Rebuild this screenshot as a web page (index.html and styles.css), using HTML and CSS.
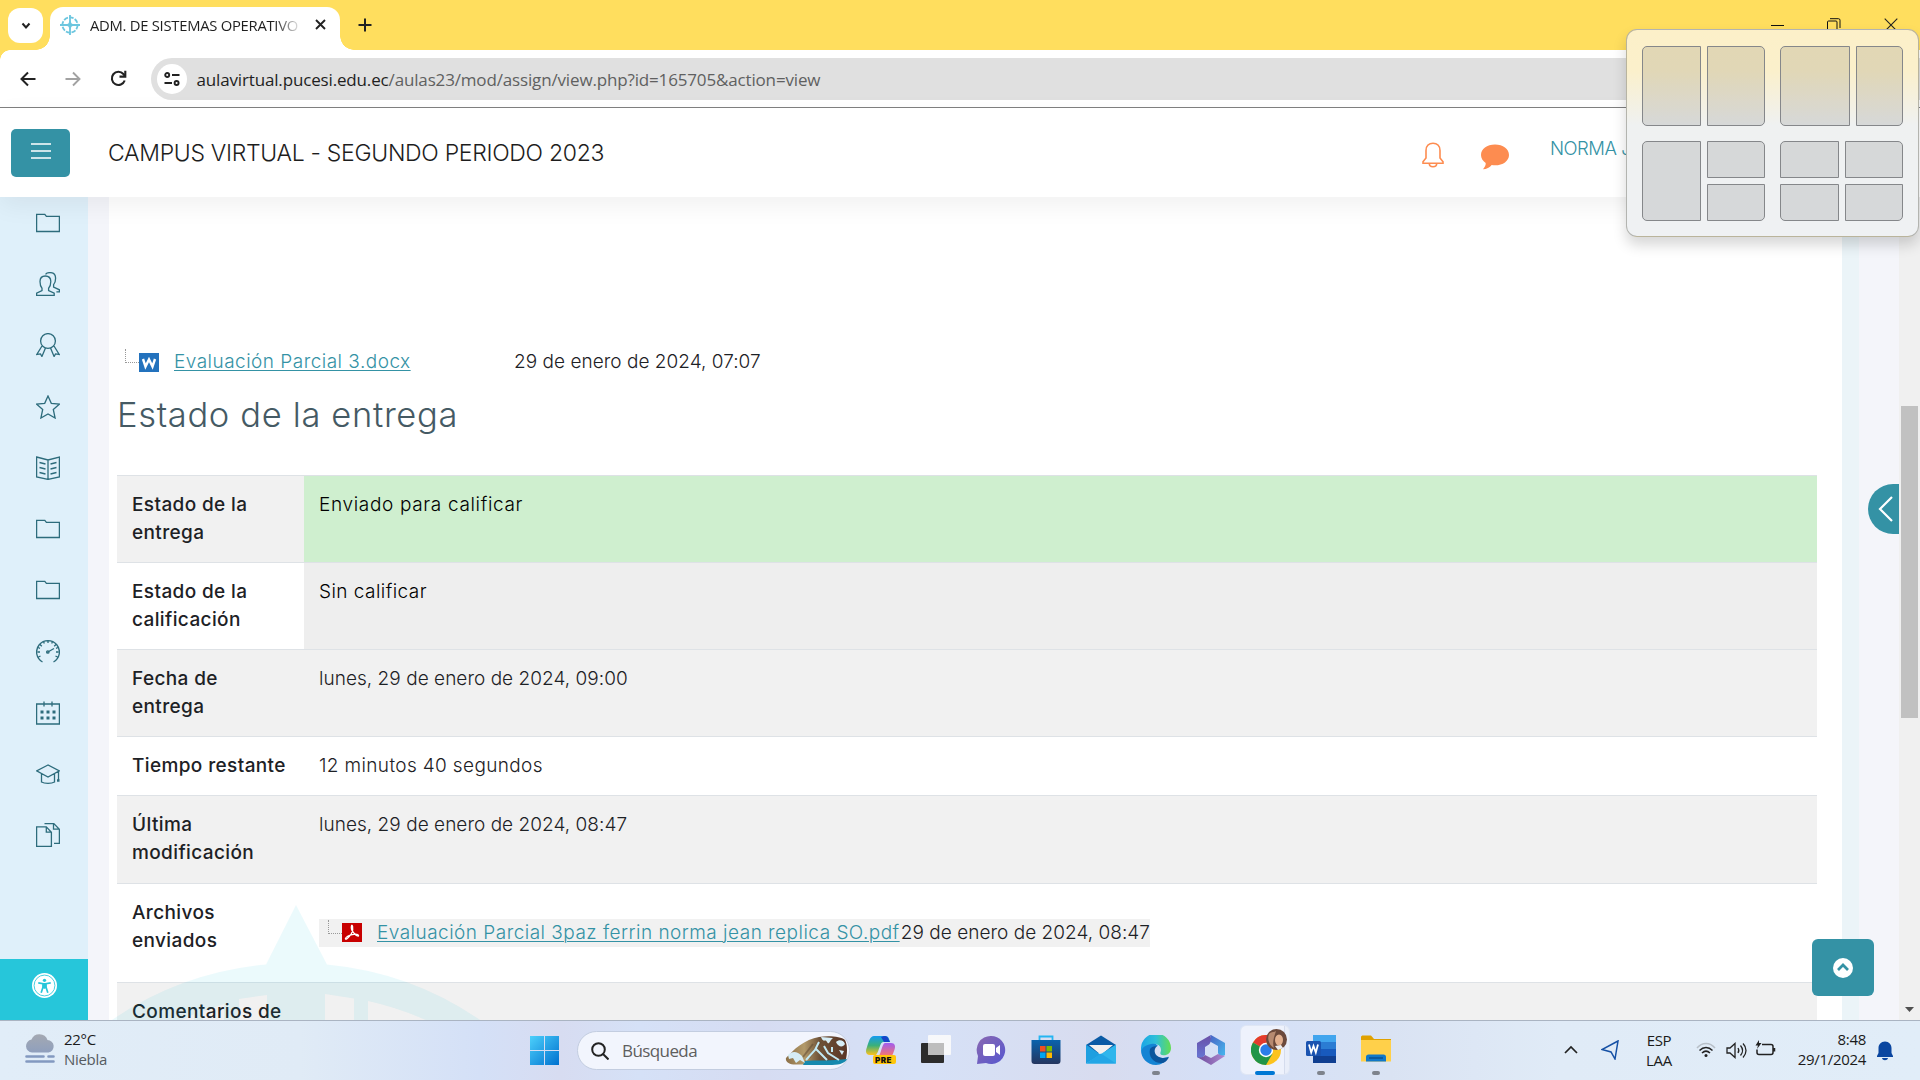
FILE: index.html
```html
<!DOCTYPE html>
<html lang="es">
<head>
<meta charset="utf-8">
<title>ADM. DE SISTEMAS OPERATIVOS</title>
<link rel="stylesheet" href="styles.css">
</head>
<body>
<svg class="defs" width="0" height="0">
  <symbol id="folder" viewBox="0 0 24 24"><path d="M.6 3.300h8.200l1.600 2h13v15.200H.6z"/></symbol>
</svg>
<div class="screen">
  <div class="tabstrip">
    <button class="tabsearch"><svg width="10" height="8" viewBox="0 0 10 8"><path d="M1.500 1.500 5 5.500 8.500 1.500" fill="none" stroke="#222" stroke-width="2"/></svg></button>
    <div class="tab">
      <svg width="20" height="20" viewBox="0 0 20 20" fill="none" stroke="#6cc6df" stroke-width="1.800"><circle cx="10" cy="10" r="7.600" stroke-dasharray="4.500 1.300"/><path d="M10 0v20M0 10h20" stroke-width="1.800"/><path d="M10 5l1.600 3.400L15 10l-3.400 1.600L10 15l-1.600-3.400L5 10l3.400-1.600z" fill="#6cc6df" stroke="none"/></svg>
      <span class="tab-title">ADM. DE SISTEMAS OPERATIVO</span>
      <svg class="tab-x" width="11" height="11" viewBox="0 0 11 11"><path d="M1 1l9 9M10 1l-9 9" stroke="#222" stroke-width="1.900"/></svg>
    </div>
    <svg class="plus" width="14" height="14" viewBox="0 0 14 14"><path d="M7 .5v13M.5 7h13" stroke="#222" stroke-width="2"/></svg>
    <div class="winctl">
      <svg width="13" height="13" viewBox="0 0 13 13"><path d="M0 6.500h13" stroke="#111"/></svg>
      <svg width="14" height="14" viewBox="0 0 14 14" fill="none" stroke="#111"><rect x=".5" y="3" width="9.500" height="10.500" rx="1"/><path d="M3 .700h8.500a1.500 1.500 0 0 1 1.500 1.500V10"/></svg>
      <svg width="14" height="14" viewBox="0 0 14 14"><path d="M.7.700l12.600 12.600M13.300.700L.7 13.300" stroke="#222" stroke-width="1.100"/></svg>
    </div>
  </div>
  <div class="toolbar">
    <svg width="16" height="16" viewBox="0 0 16 16" fill="none" stroke="#222" stroke-width="2"><path d="M15.500 8H1.500M8 1.500 1.500 8 8 14.500"/></svg>
    <svg width="16" height="16" viewBox="0 0 16 16" fill="none" stroke="#a2a2a2" stroke-width="1.900"><path d="M.5 8h14M8 1.500 14.500 8 8 14.500"/></svg>
    <svg width="17" height="17" viewBox="0 0 17 17" fill="none" stroke="#222" stroke-width="2.100"><path d="M14.700 10.500A6.600 6.600 0 1 1 13.400 4l1.600 2"/><path d="M15.300.800V6.600H9.500"/></svg>
    <div class="omnibox">
      <span class="siteinfo"><svg width="16" height="14" viewBox="0 0 16 14" fill="none" stroke="#222" stroke-width="1.900"><circle cx="3.200" cy="3" r="2"/><path d="M8 3h7.500M.5 11h7.500"/><circle cx="12.600" cy="11" r="2"/></svg></span>
      <span class="url"><b>aulavirtual.pucesi.edu.ec</b>/aulas23/mod/assign/view.php?id=165705&amp;action=view</span>
    </div>
  </div>
  <header class="site">
    <button class="burger"><svg width="20" height="16" viewBox="0 0 20 16"><path d="M0 1h20M0 8h20M0 15h20" stroke="#fff" stroke-width="1.700"/></svg></button>
    <h1>CAMPUS VIRTUAL - SEGUNDO PERIODO 2023</h1>
    <svg class="bell" width="22" height="26" viewBox="0 0 22 26" fill="none" stroke="#fd8c50" stroke-width="1.600"><path d="M1 21.200v-1.500l3-3.700V8.500C4 4 7 1.200 11 1.200S18 4 18 8.500V16l3 3.700v1.500zM7.300 21.500c0 2 1.700 3.300 3.700 3.300s3.700-1.300 3.700-3.300"/></svg>
    <svg class="chat" width="30" height="26" viewBox="0 0 30 26"><path d="M15 .5C7 .5 1 5 1 11c0 3.300 1.800 6 4.700 8 .3 2.200-1.200 4.500-2.700 6.300 3.600 0 6.700-1.800 8.700-4.200 9.500 1.500 17.300-3.400 17.300-10.100C29 5 23 .5 15 .5z" fill="#fd8c50"/></svg>
    <span class="user">NORMA J</span>
  </header>
  <div class="page">
    <nav class="side">
      <svg><use href="#folder"/></svg>
      <svg viewBox="0 0 24 24"><path d="M.6 23.400v-2.200L6 18.500v-2.300C4.400 14.500 4 12.500 4 9.500 4 6 6 4 9.300 4s5.500 2 5.500 5.500c0 3-.6 5-2.200 6.700v2.300l5.600 2.700v2.200zM9.500 2.300C10.600 1 12.400.600 14 .600c3.300 0 5.600 2 5.600 5.700 0 3-.5 4.700-2 6.300V15l5.800 2.800v2h-3"/></svg>
      <svg viewBox="0 0 24 24"><circle cx="12" cy="8" r="7.400"/><path d="M6 13 .8 21.500l3.700-.6 1.400 2.600L9.500 15M18 13l5.200 8.500-3.700-.6-1.400 2.600L14.500 15"/></svg>
      <svg viewBox="0 0 24 24"><path d="m12 1 3.300 7.300 8 .9-6 5.300 1.800 8.500-7.100-4-7.100 4 1.800-8.500-6-5.300 8-.9z"/></svg>
      <svg viewBox="0 0 24 24"><path d="M.6 1 12 4 23.400 1v20L12 23.400.6 21zM12 4v19M3.500 6.500l6 1.500M3.500 11.500l6 1.500M3.500 16.500l6 1.500M20.500 6.500l-6 1.500M20.500 11.500l-6 1.500M20.500 16.500l-6 1.500"/></svg>
      <svg><use href="#folder"/></svg>
      <svg><use href="#folder"/></svg>
      <svg viewBox="0 0 24 24"><path d="M6.500 23A11.400 11.400 0 1 1 17.500 23M12 1.500v2.500M1.500 13H4M20 13h2.500M4 5.500l1.800 1.800M20 5.500l-1.800 1.800M7.500 2.500l.8 2M16.500 2.500l-.8 2M2 8.500l2 .8M22 8.500l-2 .8M2.500 18l2-1M21.500 18l-2-1M11 13.500l7-4"/><circle cx="11.800" cy="13" r="1.200"/></svg>
      <svg viewBox="0 0 24 24"><path d="M.6 3h22.800v20H.6zM8 .5v5M16 .5v5"/><path d="M4.500 11h3M10.500 11h3M16.500 11h3M4.500 17h3M10.500 17h3M16.500 17h3" stroke-width="3"/></svg>
      <svg viewBox="0 0 24 24"><path d="M12 3 .6 8.800 12 15l11.400-6.200zM5.500 12v8c3 1.700 10 1.700 13 0v-8M22.500 9.500V18"/><path d="M21 18.500h2.500" stroke-width="2.500"/></svg>
      <svg viewBox="0 0 24 24"><path d="M.6 3.800h9.700l5.100 5.400v14.200H.6zM10.300 3.800v5.400h5.100M8.500.600h9.300l5.600 5.600v14.200H18M17.500.600v5.600h5.900"/></svg>
      <div class="access"><svg viewBox="0 0 24 24"><circle cx="12" cy="12" r="12" fill="#fff" stroke="none"/><circle cx="12" cy="12" r="10" fill="none" stroke="#26c6da" stroke-width=".8"/><circle cx="12" cy="7" r="1.600" fill="#26c6da" stroke="none"/><path d="M6 9.500l4.500.800v3.500L8.800 19M18 9.500l-4.500.800v3.500l1.700 5.200M10.500 10.500h3M12 10v5" stroke="#26c6da" stroke-width="1.600"/></svg></div>
    </nav>
    <main>
      <div class="file">
        <i class="twig"></i><svg class="ficon" viewBox="0 0 20 19"><path fill="#2372bd" d="M0 0h20v19H0z"/><path d="M4 6l2.500 7.500L10 6.500l3.500 7L16 6" fill="none" stroke="#fff" stroke-width="2.400"/></svg>
        <div class="c1"><a>Evaluación Parcial 3.docx</a></div><span>29 de enero de 2024, 07:07</span>
      </div>
      <h2>Estado de la entrega</h2>
      <table>
        <tr><th>Estado de la entrega</th><td class="ok">Enviado para calificar</td></tr>
        <tr><th>Estado de la calificación</th><td class="nograde">Sin calificar</td></tr>
        <tr><th>Fecha de<br>entrega</th><td class="date">lunes, 29 de enero de 2024, 09:00</td></tr>
        <tr><th>Tiempo restante</th><td class="left">12 minutos 40 segundos</td></tr>
        <tr class="tall"><th>Última modificación</th><td class="date">lunes, 29 de enero de 2024, 08:47</td></tr>
        <tr><th>Archivos enviados</th><td><div class="file sent"><i class="twig"></i><svg class="ficon" viewBox="0 0 20 19"><path fill="#c80000" d="M0 0h20v19H0z"/><path d="M3.500 15.500C5 11.500 16 10 16.500 12.500S9 9.500 9.300 4s3 2 .2 6.500-6.500 7-6 5z" fill="none" stroke="#fff" stroke-width="1.300"/></svg><div class="c2"><a>Evaluación Parcial 3paz ferrin norma jean replica SO.pdf</a></div><span>29 de enero de 2024, 08:47</span></div></td></tr>
        <tr class="last"><th>Comentarios de</th><td></td></tr>
      </table>
      <svg class="mark" width="386" height="115" viewBox="109 905 386 115"><path fill="#00bcd4" fill-opacity=".08" fill-rule="evenodd" d="M109 1022A325 325 0 0 1 266 964.500L296 905l31 59.500A325 325 0 0 1 483 1022zM178 1022l16-8v8zM203 1011l21-7v18h-21zM239 999l28-4v27h-28zM325 994l29 4.500v23.500h-29zM368 1001a300 300 0 0 1 62 21h-62z"/></svg>
    </main>
    <div class="gutter"></div>
    <div class="scroll"><i></i><svg width="9" height="5" viewBox="0 0 9 5"><path d="M0 0h9L4.500 5z" fill="#505050"/></svg></div>
    <button class="drawer"><svg width="16" height="26" viewBox="0 0 16 26"><path d="M14 1 2 13l12 12" fill="none" stroke="#fff" stroke-width="2.200"/></svg></button>
    <button class="top"><svg width="20" height="20" viewBox="0 0 20 20"><circle cx="10" cy="10" r="10" fill="#fff"/><path d="M5 12l5-5 5 5" fill="none" stroke="#3492a5" stroke-width="2.700"/></svg></button>
  </div>
  <div class="taskbar">
    <div class="weather">
      <svg width="30" height="30" viewBox="0 0 30 30"><defs><linearGradient id="cl" x2="0" y2="1"><stop stop-color="#a4a9b2"/><stop offset="1" stop-color="#8f9fbd"/></linearGradient></defs><path d="M7 18.500a6.500 6.500 0 0 1-.5-12.900A8.500 8.500 0 0 1 22.500 6 6.300 6.300 0 0 1 23.500 18.500z" fill="url(#cl)"/><path d="M1.500 22.500h17M23.500 22.500h5M1.500 27.500h27" stroke="#8399c0" stroke-width="2.600" stroke-linecap="round"/></svg>
      <div><span class="temp">22°C</span><span class="cond">Niebla</span></div>
    </div>
    <svg class="start" width="29" height="29" viewBox="0 0 29 29"><defs><linearGradient id="wn" x2="1" y2="1"><stop stop-color="#4cd0fb"/><stop offset="1" stop-color="#0071cf"/></linearGradient></defs><path fill="url(#wn)" d="M0 0h14v14H0zM15 0h14v14H15zM0 15h14v14H0zM15 15h14v14H15z"/></svg>
    <div class="search">
      <svg width="18" height="18" viewBox="0 0 18 18" fill="none" stroke="#222" stroke-width="2"><circle cx="7.500" cy="7.500" r="6.300"/><path d="M12 12l5.500 5.500"/></svg>
      <span>Búsqueda</span>
      <svg width="64" height="30" viewBox="0 0 64 30"><defs><linearGradient id="rk"><stop stop-color="#8c7048"/><stop offset=".3" stop-color="#b39a6a"/><stop offset=".55" stop-color="#6e5238"/><stop offset="1" stop-color="#5a3626"/></linearGradient></defs><path d="M1 22C8 14 20 3 34 1c10-1.500 22-.5 26 3 3 6 2 14 1 19-4 5-12 5-18 5.500H12C5 29 0 26 1 22z" fill="url(#rk)"/><path d="M18 21l10-13M24 22l12-16" stroke="#5b4630" stroke-width="2" opacity=".5"/><path d="M20 25c10-1 28 0 42-2-2 5-10 6-18 6H18z" fill="#1689ae"/><path d="M3 19c4-4 9-4 14 1l3 7-5-3-4 3-3-5-4 1zM36 1c3 7 4 1 6 5s3-2 6-4zM51 6c3-3 8-2 9 2-2 4-7 3-9-2zM54 14l5 1-2 4z" fill="#d6edf6"/><path d="M34 6 30 14l-9 10M31 13l11 11M39 10l4 7 11 7M47 11v5" fill="none" stroke="#c3e9f4" stroke-width="2"/></svg>
    </div>
    <div class="apps">
      <span><svg width="30" height="30" viewBox="0 0 30 30"><defs><linearGradient id="c1" x2="0" y2="1"><stop stop-color="#149bf0"/><stop offset=".5" stop-color="#3bb07a"/><stop offset="1" stop-color="#ffc21a"/></linearGradient><linearGradient id="c2" x2="0" y2="1"><stop stop-color="#a05cf0"/><stop offset="1" stop-color="#ff7a62"/></linearGradient></defs><path d="M8 1h12c2 0 3 2 4 6h-7c-3 0-4 10-7 13H4c-4 0-5-3-3-8C3 6 4 1 8 1z" fill="url(#c1)"/><path d="M18 1c4 0 4 2 6 6h-6l-3-5z" fill="#1444c8"/><path d="M19 8h6c4 0 5 3 3 8-1 3-2 6-5 6H12c3-2 4-14 7-14z" fill="url(#c2)"/><rect x="7" y="20" width="23" height="9" rx="2" fill="#ffc60b"/></svg><em>PRE</em></span>
      <span><svg width="30" height="30" viewBox="0 0 30 30"><rect y="8" width="23" height="20" rx="1" fill="#2c2c2c"/><rect x="7" width="23" height="20" rx="1" fill="#fbfbfb" fill-opacity=".9"/><path d="M7 8h16v12H7z" fill="#bdbdbd"/></svg></span>
      <span><svg width="30" height="30" viewBox="0 0 30 30"><defs><linearGradient id="tc" x2="1" y2="1"><stop stop-color="#8a68b0"/><stop offset="1" stop-color="#5657d0"/></linearGradient></defs><path d="M15 1a14 14 0 1 1-5 27L1 29l1-8A14 14 0 0 1 15 1z" fill="url(#tc)"/><rect x="7" y="9" width="12" height="12" rx="2" fill="#fff"/><path d="M20 13l4-3v10l-4-3z" fill="#fff"/></svg></span>
      <span><svg width="30" height="30" viewBox="0 0 30 30"><defs><linearGradient id="st" x2="0" y2="1"><stop stop-color="#0a63ad"/><stop offset="1" stop-color="#25365f"/></linearGradient></defs><path d="M8.500 6V1.500h13V6" fill="none" stroke="#25b5f2" stroke-width="1.800"/><path d="M.5 5h29v21a3 3 0 0 1-3 3h-23a3 3 0 0 1-3-3z" fill="url(#st)"/><path d="M9 11h5.500v5.500H9z" fill="#f25022"/><path d="M15.500 11H21v5.500h-5.500z" fill="#7fba00"/><path d="M9 17.500h5.500V23H9z" fill="#00a4ef"/><path d="M15.500 17.500H21V23h-5.500z" fill="#ffb900"/></svg></span>
      <span><svg width="30" height="30" viewBox="0 0 30 30"><path d="M0 10 15 .5 30 10v8H0z" fill="#0b5ba5"/><path d="M3 10h24L15 20z" fill="#f3f1ef"/><path d="M0 9.500 15 20 0 28.500z" fill="#1e9fe0"/><path d="M30 9.500v19H0L15 19z" fill="#2fb6ec"/><path d="M15 18.500 30 28.500H0z" fill="#23a6e6"/></svg></span>
      <span class="run"><svg width="30" height="30" viewBox="0 0 30 30"><defs><linearGradient id="ed" x2="1"><stop stop-color="#1aa5e6"/><stop offset=".5" stop-color="#2fc0d8"/><stop offset="1" stop-color="#63dd52"/></linearGradient></defs><path d="M0 15C2 5 12 5 17 11c-4 0-6 5-3 9 3 3 9 4 13.500 1.500C25 27 20 30 15 30 6 30 0 23 0 15z" fill="#1484d4"/><path d="M0 14A15 15 0 0 1 30 13c0 6-5 8-9 7-3-1-1-3-1-5 0-5-5-7-10-6C5 10 1 12 0 17z" fill="url(#ed)"/><path d="M9 14c-2 8 4 15 13 14 3-1 5-4 6-6-5 2-12 1-14-4-1-3 0-5 2-7-3 0-6 1-7 3z" fill="#0b559d"/></svg></span>
      <span><svg width="28" height="30" viewBox="0 0 28 30"><defs><linearGradient id="m1" x2="0" y2="1"><stop stop-color="#6a50a8"/><stop offset="1" stop-color="#6676d4"/></linearGradient><linearGradient id="m2" x2="1" y2="1"><stop stop-color="#4a62c4"/><stop offset="1" stop-color="#45b8ee"/></linearGradient><linearGradient id="m3"><stop stop-color="#6a4a9c"/><stop offset="1" stop-color="#b08ad0"/></linearGradient></defs><path d="M0 22V8L13 .5c2 3 1 7-1 9L8 12v8c-2 3-5 4-8 2z" fill="url(#m1)"/><path d="M14 0l14 8v12c-3 2-6 1-7-2v-7l-8-4.500C14 4 14 2 13 .5z" fill="url(#m2)"/><path d="M0 22c4 1 7 0 8-2l6 3 7-4c3 2 6 1 7 2l-14 9z" fill="url(#m3)"/></svg></span>
      <span class="active"><svg width="30" height="30" viewBox="0 0 30 30"><circle cx="15" cy="15" r="15" fill="#fcc31e"/><path d="M15 15 2 7.500A15 15 0 0 1 28 7.500H15z" fill="#e33b2e"/><path d="M2 7.500A15 15 0 0 0 15 30l6.500-11.300L15 15z" fill="#219447"/><circle cx="15" cy="15" r="7.200" fill="#fff"/><circle cx="15" cy="15" r="5.700" fill="#2b7de9"/></svg><svg class="avatar" width="21" height="21" viewBox="0 0 21 21"><circle cx="10.500" cy="10.500" r="10.500" fill="#6d4a3b"/><ellipse cx="13" cy="11" rx="4" ry="5.500" fill="#e3b08e"/><path d="M3 5c3-3 5-1 7-3-2 6-4 12-2 17-5-3-7-9-5-14z" fill="#b78a70"/><path d="M9 17l6-1 2 3-5 2z" fill="#eee"/></svg></span>
      <span class="run"><svg width="30" height="28" viewBox="0 0 30 28"><path d="M7 0h23v7H7z" fill="#41a5ee"/><path d="M7 7h23v7H7z" fill="#2b7cd3"/><path d="M7 14h23v7H7z" fill="#185abd"/><path d="M7 21h23v7H7z" fill="#103f91"/><rect y="6" width="15" height="15" rx="1.500" fill="#1a53b0"/><path d="M3 9.500l2.200 8L7.500 11l2.300 6.500 2.200-8" fill="none" stroke="#fff" stroke-width="1.800"/></svg></span>
      <span class="run"><svg width="30" height="28" viewBox="0 0 30 28"><path d="M0 2C0 1 1 .5 2 .5h8L13 4h17v6H0z" fill="#e0a100"/><path d="M0 5h30v21.500H0z" fill="#ffd04a"/><path d="M5 26.500V22a2.500 2.500 0 0 1 2.500-2.500h15A2.500 2.500 0 0 1 25 22v4.500z" fill="#1078c8"/><path d="M8 23h14" stroke="#0a4f91" stroke-width="1.500"/></svg></span>
    </div>
    <div class="tray">
      <svg class="up" width="14" height="9" viewBox="0 0 14 9"><path d="M1 8l6-6 6 6" fill="none" stroke="#222" stroke-width="1.700"/></svg>
      <svg class="loc" width="18" height="20" viewBox="0 0 18 20"><path d="M17 1 1 9.500l9 2.500 4 7z" fill="none" stroke="#1651a5" stroke-width="1.500"/></svg>
      <div class="lang"><span>ESP</span><span>LAA</span></div>
      <svg class="wifi" width="20" height="16" viewBox="0 0 20 16" fill="none" stroke="#222" stroke-width="1.500"><path d="M1 6c5-6 13-6 18 0" stroke="#b8c0c8"/><path d="M3.500 8.500c4-4 9-4 13 0M6 11c2.500-2.500 5.500-2.500 8 0"/><circle cx="10" cy="13.500" r="1.500" fill="#222" stroke="none"/></svg>
      <svg class="vol" width="21" height="17" viewBox="0 0 21 17" fill="none" stroke="#222" stroke-width="1.300"><path d="M1 6h3l5-4.500v14L4 11H1zM12 6c1 1.500 1 3.500 0 5M14.500 3.500c2.500 3 2.500 7 0 10M17 1.500c4 4 4 10 0 14"/></svg>
      <svg class="bat" width="21" height="17" viewBox="0 0 21 17"><path d="M7 4.500h9a2 2 0 0 1 2 2v6a2 2 0 0 1-2 2H4a2 2 0 0 1-2-2V9.500M19.500 8v3.500" fill="none" stroke="#222" stroke-width="1.500"/><path d="M4 0 .5 5.500H3L2 9l4.500-6H4z" fill="#222"/></svg>
      <div class="clock"><span>8:48</span><span>29/1/2024</span></div>
      <svg class="nbell" width="16" height="20" viewBox="0 0 16 20"><path d="M8 .5c4 0 6.500 3 6.500 6.500v5l1.500 3v1H0v-1l1.500-3V7C1.500 3.500 4 .5 8 .5zM5 17h6c-.5 3-5.500 3-6 0z" fill="#0a46a0"/></svg>
    </div>
  </div>
  <div class="snap">
    <div class="lay halves"><i></i><i></i></div>
    <div class="lay wide"><i></i><i></i></div>
    <div class="lay three"><i></i><i></i><i></i></div>
    <div class="lay four"><i></i><i></i><i></i><i></i></div>
  </div>
</div>
</body>
</html>
```
FILE: styles.css
```css
* { box-sizing: border-box; }
body { margin: 0; overflow: hidden; font-family: Inter, sans-serif; color: #1d2125; }
button { border: 0; padding: 0; margin: 0; display: flex; align-items: center; justify-content: center; }
svg { display: block; flex: none; }
.defs { position: absolute; }
.screen { position: relative; width: 1920px; height: 1080px; display: flex; flex-direction: column; overflow: hidden; }

.tabstrip { height: 50px; background: #ffde5e; display: flex; align-items: flex-start; padding: 7px 22px 0 8px; }
.tabsearch { width: 35px; height: 35px; margin-top: 1px; border-radius: 12px; background: #fff; }
.tab { position: relative; width: 290px; height: 43px; margin-left: 7px; padding: 0 14px 7px 10px; background: #fff; border-radius: 13px 13px 0 0; display: flex; align-items: center; }
.tab::before, .tab::after { content: ""; position: absolute; bottom: 0; width: 14px; height: 14px; }
.tab::before { left: -14px; background: radial-gradient(circle at 0 0, transparent 13.5px, #fff 14px); }
.tab::after { right: -14px; background: radial-gradient(circle at 100% 0, transparent 13.5px, #fff 14px); }
.tab-title { width: 216px; margin-left: 10px; white-space: nowrap; font: 14.8px/20px "Open Sans", sans-serif; letter-spacing: -.27px; color: #1f1f1f; mask-image: linear-gradient(90deg, #000 185px, transparent 212px); }
.tab-x { margin-left: auto; margin-bottom: 1px; }
.plus { margin: 11px 0 0 18px; }
.winctl { margin: 11px 0 0 auto; display: flex; align-items: center; gap: 43px; }

.toolbar { height: 58px; background: #fff; border-bottom: 1px solid #808080; display: flex; align-items: center; padding-left: 19.5px; gap: 29px; position: relative; }
.toolbar::before { content: ""; position: absolute; left: 0; top: 0; width: 10px; height: 10px; background: radial-gradient(circle at 100% 100%, transparent 9.5px, #ffde5e 10px); }
.omnibox { flex: 1; height: 42px; margin-left: -5px; background: #e0e0e0; border-radius: 21px 0 0 21px; display: flex; align-items: center; padding-left: 6px; }
.siteinfo { width: 30px; height: 30px; border-radius: 15px; background: #fff; display: flex; align-items: center; justify-content: center; }
.url { margin: 2px 0 0 10px; font: 17px/24px "Open Sans", sans-serif; letter-spacing: -.155px; color: #5f6060; white-space: nowrap; }
.url b { font-weight: 400; color: #1f1f1f; }

.site { height: 89px; flex: none; background: #fff; display: flex; align-items: flex-start; padding-left: 11px; position: relative; z-index: 2; box-shadow: 0 8px 24px rgba(0, 0, 0, .06); }
.burger { width: 59px; height: 48px; margin-top: 21px; padding-bottom: 5px; border-radius: 5px; background: #3492a5; }
.site h1 { width: 1314px; margin: 29px 0 0 38px; font-size: 23px; line-height: 32px; font-weight: 300; letter-spacing: -.3px; color: #1d1d1d; white-space: nowrap; }
.bell { margin-top: 34px; }
.chat { margin: 36px 0 0 36px; }
.user { margin: 26px 0 0 40px; font-size: 18.5px; line-height: 28px; font-weight: 300; letter-spacing: -.5px; color: #3492a5; }

.page { height: 823px; flex: none; display: flex; position: relative; background: #f4f5fa; overflow: hidden; }
.side { width: 88px; background: #dff0fa; display: flex; flex-direction: column; align-items: center; padding: 14px 0 0 8px; gap: 37.2px; position: relative; }
.side svg { width: 24px; height: 24px; fill: none; stroke: #2d6c7c; stroke-width: 1.3; }
.access { position: absolute; left: 0; bottom: 0; width: 88px; height: 61px; background: #26c6da; display: flex; justify-content: center; padding: 14px 0 0; }
.access svg { width: 25px; height: 25px; }
main { width: 1733px; margin-left: 21px; padding: 151px 25px 0 8px; background: #fff; position: relative; overflow: hidden; }
.mark { position: absolute; left: 0; bottom: 0; }

.file { display: flex; height: 28px; line-height: 28px; font-size: 19px; font-weight: 300; letter-spacing: .03px; white-space: nowrap; padding-left: 8px; }
.twig { width: 14px; height: 14px; margin-top: 1px; border: dotted #999; border-width: 0 0 1px 1px; }
.ficon { width: 20px; height: 19px; margin: 5px 15px 0 0; }
.file a { color: #3492a5; letter-spacing: .48px; text-decoration: underline; text-underline-offset: 2px; text-decoration-thickness: 1px; }
.c1 { width: 340px; }
.c2 { width: 524px; }
h2 { margin: 18px 0 40px; font-size: 34.5px; line-height: 41px; font-weight: 300; letter-spacing: .65px; color: #455a64; white-space: nowrap; }

table { border-collapse: separate; border-spacing: 0; width: 1700px; table-layout: fixed; font-size: 19px; line-height: 28px; }
th, td { border-top: 1px solid #dee2e6; padding: 15px; vertical-align: top; text-align: left; }
th { width: 187px; padding-right: 8px; font-weight: 500; letter-spacing: .38px; }
td { font-weight: 300; white-space: nowrap; }
tr:nth-child(odd) { background: #f1f1f1; }
.tall { height: 88px; }
td.ok { background: #cfefcf; color: #000; letter-spacing: .66px; }
td.nograde { background: #eee; color: #000; letter-spacing: .45px; }
td.date { letter-spacing: .04px; }
td.left { letter-spacing: .36px; }
.sent { width: 831px; margin: 20px 0; padding-left: 9px; background: #f1f1f1; }
.sent .ficon { margin-top: 4px; }

.gutter { width: 57px; background: linear-gradient(90deg, #ebf4f8 17px, #f4f5fa 17px); }
.scroll { width: 21px; background: #f0f0f0; display: flex; flex-direction: column; align-items: center; justify-content: space-between; padding: 209px 0 8px; }
.scroll i { width: 17px; height: 312px; background: #c1c1c1; }
.drawer { position: absolute; left: 1868px; top: 287px; width: 31px; height: 50px; border-radius: 25px 0 0 25px; background: #3492a5; padding-left: 4px; }
.top { position: absolute; left: 1812px; top: 742px; width: 62px; height: 57px; border-radius: 6px; background: #3492a5; }

.taskbar { height: 60px; border-top: 1px solid #aab4c2; background: linear-gradient(90deg, #e1edf8 0, #e0ebf6 300px, #d4e0f7 480px, #d7dcf1 560px, #d5e1f7 640px, #d6dcf2 760px, #d6e1f7 920px, #d8dcef 1100px, #d4e0f8 1240px, #dae3f3 1390px, #e0ebf7 1560px, #e1edf8 1920px); display: flex; font-family: "Open Sans", sans-serif; font-size: 15px; line-height: 20px; letter-spacing: -.3px; color: #1b1b1b; }
.weather { width: 530px; display: flex; padding: 8px 0 0 25px; gap: 9px; }
.weather svg { margin-top: 5px; }
.weather span { display: block; width: max-content; }
.cond { color: #555b61; }
.start { margin-top: 15px; }
.search { width: 273px; height: 39px; margin: 10px 0 0 18px; border: 1px solid #c3cde0; border-radius: 20px; background: #f2f5fd; display: flex; align-items: center; padding-left: 13px; }
.search span { width: 163px; margin-left: 13px; font-size: 17px; letter-spacing: -.59px; color: #5e5e5e; }
.apps { display: flex; margin-left: 3px; }
.apps span { width: 55px; height: 59px; display: flex; justify-content: center; padding-top: 14px; position: relative; }
.apps em { position: absolute; left: 22px; top: 35px; font: 900 8px/9px Inter, sans-serif; letter-spacing: .5px; color: #111; }
.run::after { content: ""; position: absolute; left: 24px; bottom: 5px; width: 8px; height: 4px; border-radius: 2px; background: #7e838c; }
.active::before { content: ""; position: absolute; left: 3px; top: 5px; width: 48px; height: 48px; border-radius: 5px; background: linear-gradient(90deg, #eef2fc 43px, #d5dced 43px, #d5dced 44px, #e9eef9 44px); box-shadow: 0 0 0 1px #dfe6f4; }
.active svg { position: relative; }
.active .avatar { position: absolute; left: 28px; top: 8px; }
.active::after { content: ""; position: absolute; left: 17px; bottom: 5px; width: 20px; height: 4px; border-radius: 2px; background: #0078d4; }
.tray { margin-left: 161px; display: flex; }
.up { margin-top: 24px; }
.loc { margin: 19px 0 0 23px; }
.lang { width: 26px; margin: 9px 0 0 27px; }
.lang span, .clock span { display: block; width: max-content; margin: 0 auto; }
.wifi { margin: 21px 0 0 24px; }
.vol { margin: 21px 0 0 10px; }
.bat { margin: 19px 0 0 8px; }
.clock { width: 70px; margin: 8px 0 0 20px; }
.clock span { margin-right: 0; }
.nbell { margin: 20px 0 0 11px; }

.snap { position: absolute; z-index: 5; left: 1626px; top: 29px; width: 293px; height: 208px; border: 1px solid rgba(120, 120, 110, .5); border-radius: 11px; padding: 16px 15px; background: linear-gradient(180deg, #fcf0c9 0, #fbf0cb 40px, #eff1f1 95px, #eff1f3 100%); box-shadow: 0 8px 14px rgba(0, 0, 0, .16); display: grid; grid-template-columns: 123px 123px; grid-template-rows: 80px 80px; gap: 15px; }
.lay { display: grid; gap: 6px; }
.lay i { border: 1px solid #85878a; background: rgba(0, 0, 0, .1); }
.halves { grid-template-columns: 59px 58px; }
.wide { grid-template-columns: 70px 47px; }
.three { grid-template: 37px 37px / 59px 58px; }
.three i:first-child { grid-row: span 2; }
.four { grid-template: 37px 37px / 59px 58px; }
.halves i:first-child, .wide i:first-child, .three i:first-child { border-radius: 5px 0 0 5px; }
.halves i:last-child, .wide i:last-child { border-radius: 0 5px 5px 0; }
.three i:nth-child(2), .four i:nth-child(2) { border-top-right-radius: 5px; }
.three i:nth-child(3), .four i:nth-child(4) { border-bottom-right-radius: 5px; }
.four i:first-child { border-top-left-radius: 5px; }
.four i:nth-child(3) { border-bottom-left-radius: 5px; }
```
